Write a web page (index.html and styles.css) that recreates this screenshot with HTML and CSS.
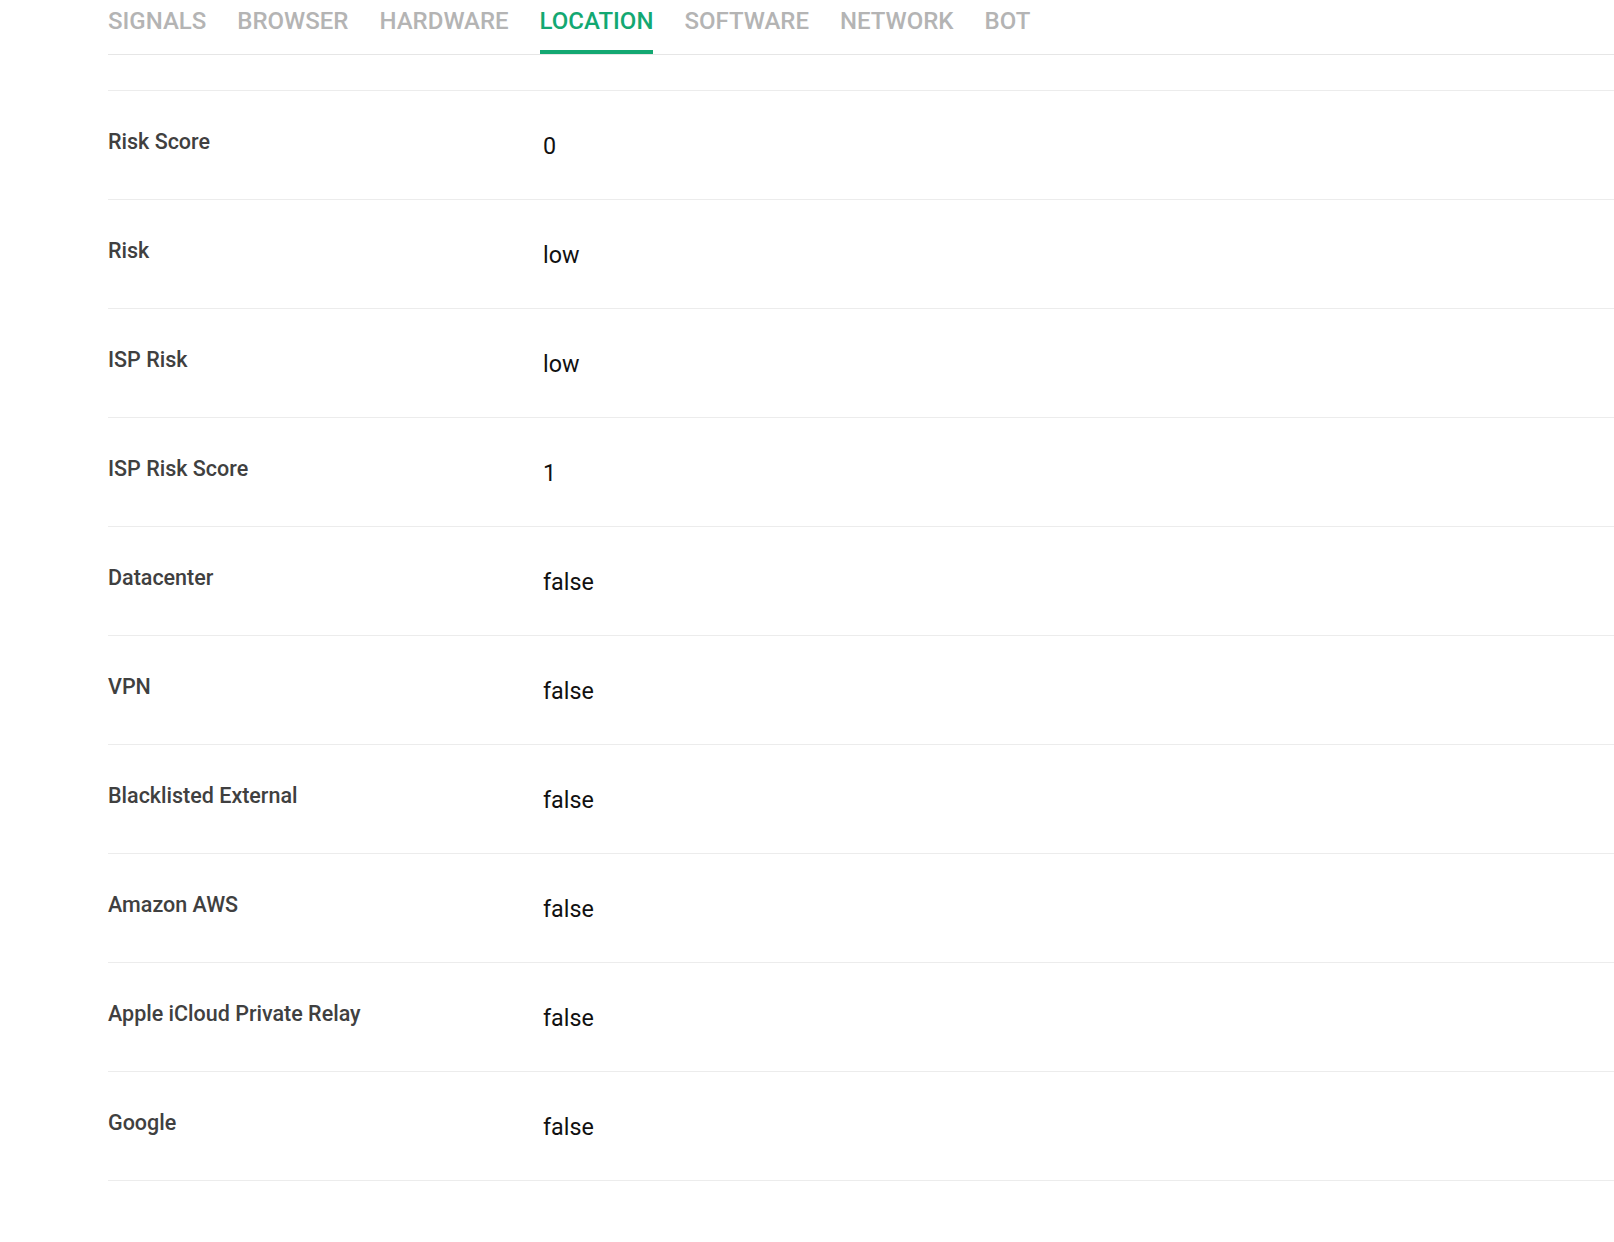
FILE: index.html
```html
<!DOCTYPE html>
<html lang="en">
<head>
    <meta charset="UTF-8">
    <meta name="viewport" content="width=device-width, initial-scale=1.0">
    <title>Location</title>
    <link rel="stylesheet" href="styles.css">
</head>
<body>
    <div class="page">
        <nav class="tabs">
            <a class="tab">SIGNALS</a>
            <a class="tab">BROWSER</a>
            <a class="tab">HARDWARE</a>
            <a class="tab active">LOCATION</a>
            <a class="tab">SOFTWARE</a>
            <a class="tab">NETWORK</a>
            <a class="tab">BOT</a>
        </nav>

        <div class="details">
            <div class="row"><div class="label">Risk Score</div><div class="value">0</div></div>
            <div class="row"><div class="label">Risk</div><div class="value">low</div></div>
            <div class="row"><div class="label">ISP Risk</div><div class="value">low</div></div>
            <div class="row"><div class="label">ISP Risk Score</div><div class="value">1</div></div>
            <div class="row"><div class="label">Datacenter</div><div class="value">false</div></div>
            <div class="row"><div class="label">VPN</div><div class="value">false</div></div>
            <div class="row"><div class="label">Blacklisted External</div><div class="value">false</div></div>
            <div class="row"><div class="label">Amazon AWS</div><div class="value">false</div></div>
            <div class="row"><div class="label">Apple iCloud Private Relay</div><div class="value">false</div></div>
            <div class="row"><div class="label">Google</div><div class="value">false</div></div>
        </div>
    </div>
</body>
</html>
```

FILE: styles.css
```css
* {
  margin: 0;
  padding: 0;
  box-sizing: border-box;
}

body {
  background: #fff;
  font-family: Roboto, 'Liberation Sans', sans-serif;
  overflow: hidden;
}

.page {
  padding-left: 108px;
}

.tabs {
  display: flex;
  gap: 31px;
  height: 55px;
  border-bottom: 1px solid #e6e6e6;
}

.tab {
  position: relative;
  font-size: 24px;
  font-weight: 500;
  color: #b4b4b4;
  line-height: 28px;
  padding-top: 7px;
  text-decoration: none;
}

.tab.active {
  color: #13a872;
}

.tab.active::after {
  content: "";
  position: absolute;
  left: 0;
  right: 0;
  bottom: 0;
  height: 4px;
  background: #13a872;
}

.details {
  margin-top: 35px;
  border-bottom: 1px solid #ececec;
}

.row {
  display: flex;
  height: 109px;
  padding-top: 38px;
  border-top: 1px solid #ececec;
}

.label {
  width: 435px;
  font-size: 21.5px;
  font-weight: 500;
  color: #404040;
}

.value {
  margin-top: 3px;
  font-size: 23.3px;
  color: #111;
}
```
